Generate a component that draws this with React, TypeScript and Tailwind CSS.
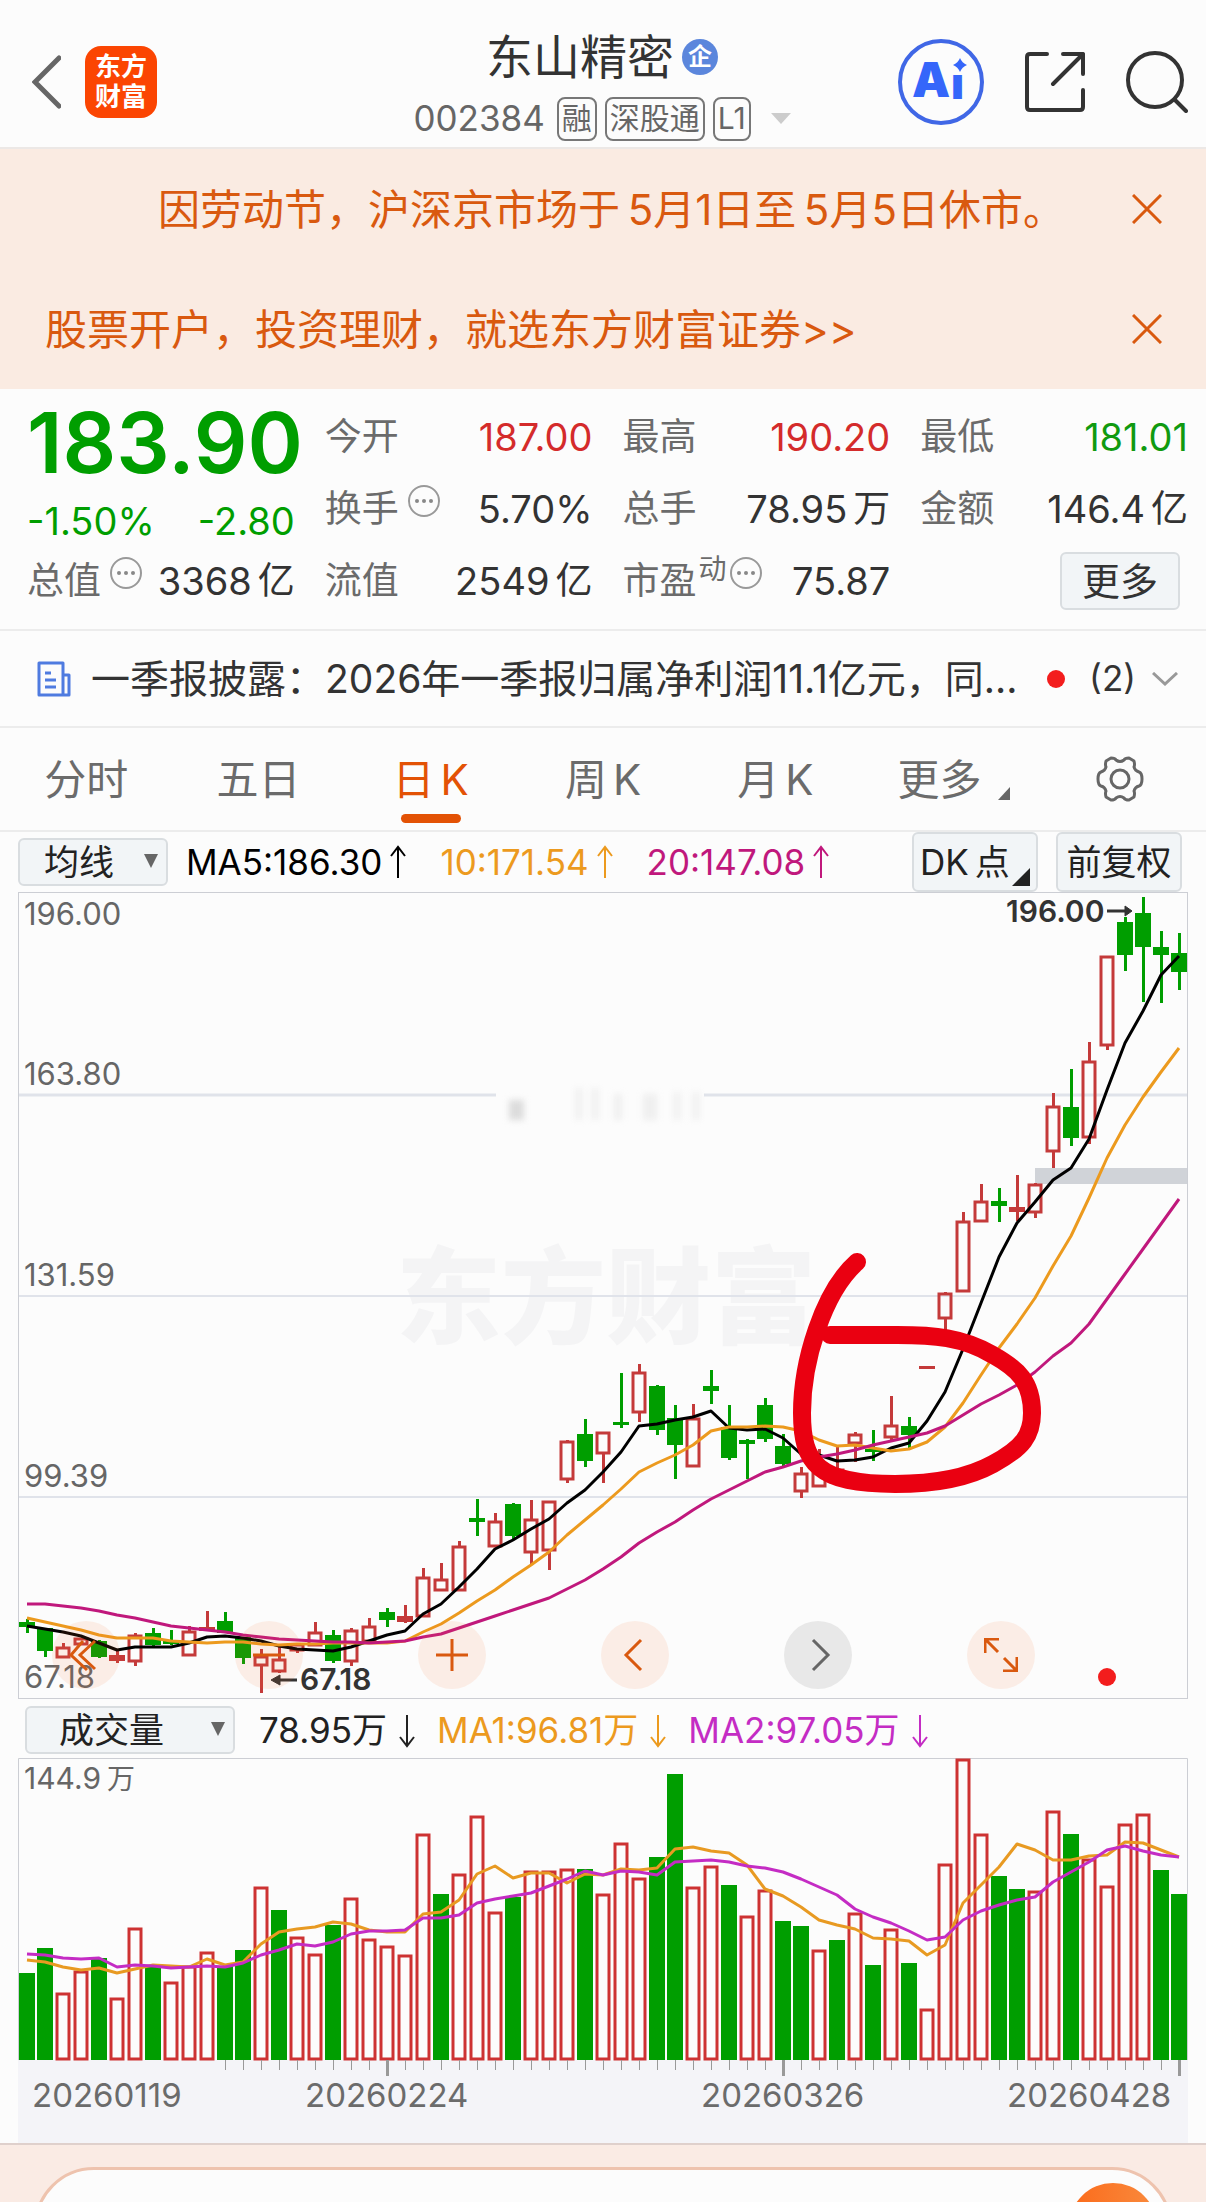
import { useState, type ReactNode } from "react";

type Candle = {
  up: boolean;
  high: number;
  top: number;
  bottom: number;
  low: number;
};

// direction, high, body top, body bottom, low (chart units, measured from the top)
const RAW_CANDLES: [string, number, number, number, number][] = [
  ["g", 727, 730, 735, 741],
  ["g", 736, 736, 759, 765],
  ["r", 751, 755, 766, 766],
  ["r", 746, 746, 753, 753],
  ["g", 748, 749, 765, 766],
  ["r", 759, 763, 769, 771],
  ["r", 741, 743, 770, 774],
  ["g", 736, 741, 753, 754],
  ["g", 738, 749, 752, 753],
  ["r", 734, 739, 764, 764],
  ["r", 719, 735, 739, 739],
  ["g", 720, 729, 741, 741],
  ["g", 745, 745, 766, 772],
  ["r", 757, 764, 774, 801],
  ["r", 755, 767, 780, 781],
  ["r", 751, 752, 759, 761],
  ["r", 730, 740, 754, 754],
  ["g", 738, 743, 769, 771],
  ["r", 736, 738, 770, 774],
  ["r", 726, 734, 750, 750],
  ["g", 716, 720, 728, 735],
  ["r", 713, 724, 730, 731],
  ["r", 676, 685, 725, 725],
  ["r", 671, 687, 699, 699],
  ["r", 649, 654, 699, 699],
  ["g", 607, 626, 630, 644],
  ["r", 621, 629, 655, 655],
  ["g", 611, 612, 644, 647],
  ["r", 608, 627, 661, 673],
  ["r", 609, 609, 659, 678],
  ["r", 548, 549, 588, 591],
  ["g", 527, 542, 569, 575],
  ["r", 540, 540, 562, 591],
  ["g", 481, 530, 533, 536],
  ["r", 472, 480, 521, 530],
  ["g", 493, 494, 538, 543],
  ["g", 513, 526, 553, 587],
  ["r", 512, 526, 575, 575],
  ["g", 478, 494, 499, 512],
  ["g", 513, 535, 566, 568],
  ["g", 547, 548, 552, 587],
  ["g", 506, 513, 547, 550],
  ["g", 542, 554, 572, 574],
  ["r", 575, 581, 600, 606],
  ["r", 557, 579, 595, 595],
  ["r", 555, 577, 591, 591],
  ["r", 540, 542, 552, 570],
  ["g", 538, 557, 560, 569],
  ["r", 504, 533, 546, 548],
  ["g", 525, 534, 543, 556],
  ["r", 474, 474, 477, 477],
  ["r", 400, 401, 427, 438],
  ["r", 320, 329, 400, 400],
  ["r", 292, 309, 330, 330],
  ["g", 296, 309, 314, 330],
  ["r", 283, 315, 320, 329],
  ["r", 291, 292, 321, 326],
  ["r", 201, 214, 260, 276],
  ["g", 177, 215, 246, 254],
  ["r", 150, 169, 246, 252],
  ["r", 64, 64, 154, 158],
  ["g", 25, 30, 63, 79],
  ["g", 5, 21, 55, 110],
  ["g", 39, 55, 63, 111],
  ["g", 41, 61, 80, 98],
];

const CANDLES: Candle[] = RAW_CANDLES.map(([dir, high, top, bottom, low]) => ({
  up: dir === "r",
  high,
  top,
  bottom,
  low,
}));

const MA5 = [
  734, 737, 740, 744, 751, 758, 755, 755, 755, 751, 745, 744, 746, 749, 754,
  757, 758, 759, 755, 749, 743, 739, 722, 712, 695, 677, 657, 648, 637, 627,
  611, 598, 580, 560, 534, 532, 528, 525, 519, 536, 538, 537, 546, 562, 563,
  569, 568, 565, 556, 551, 529, 500, 457, 411, 365, 331, 310, 288, 276, 247,
  198, 151, 119, 83, 64,
];
const MA10 = [
  726, 730, 734, 738, 743, 746, 746, 746, 749, 750, 751, 750, 750, 752, 753,
  752, 752, 751, 751, 751, 751, 749, 740, 732, 721, 709, 698, 685, 673, 660,
  643, 628, 613, 597, 580, 571, 563, 553, 539, 535, 535, 534, 535, 539, 548,
  554, 553, 556, 559, 557, 550, 535, 511, 483, 456, 432, 406, 374, 344, 306,
  266, 233, 205, 180, 156,
];
const MA20 = [
  712, 712, 714, 716, 719, 723, 726, 730, 734, 736, 738, 740, 743, 745, 747,
  748, 749, 750, 750, 751, 750, 749, 745, 742, 736, 730, 724, 718, 712, 706,
  697, 688, 677, 665, 651, 640, 630, 618, 607, 598, 589, 580, 575, 569, 565,
  562, 558, 553, 549, 545, 541, 534, 523, 512, 503, 493, 480, 464, 451, 432,
  407, 382, 357, 332, 307,
];

// volume figures are in thirds of a chart unit, measured from the row above the plot
const VOLUME = [
  849, 774, 910, 845, 806, 924, 716, 830, 878, 828, 786, 830, 780, 592, 661,
  743, 792, 707, 625, 748, 768, 797, 432, 612, 554, 380, 667, 622, 545, 543,
  538, 537, 613, 461, 564, 501, 254, 591, 529, 587, 680, 601, 695, 709, 781,
  751, 669, 827, 717, 820, 958, 523, 207, 432, 560, 599, 604, 364, 432, 507,
  588, 403, 374, 541, 614,
];
const VOLUME_COLORS =
  "ggrrgrrgrrrggrgrrgrrrrrgrrrgrrrgrrrggrrgrrggrgrgrgrrrrggrrgrrrrgg";
const VOL_MA1 = [
  811, 816, 832, 842, 835, 850, 838, 825, 829, 831, 808, 826, 818, 763, 728,
  719, 711, 698, 704, 722, 726, 727, 673, 668, 630, 554, 528, 565, 550, 549,
  580, 554, 557, 539, 541, 536, 479, 472, 485, 490, 525, 597, 618, 653, 690,
  706, 718, 744, 748, 754, 796, 766, 641, 585, 532, 463, 480, 510, 511, 500,
  497, 458, 460, 480, 501,
];
const VOL_MA2 = [
  793, 795, 805, 809, 805, 831, 827, 828, 834, 833, 828, 832, 821, 797, 780,
  763, 770, 756, 734, 725, 723, 720, 684, 686, 676, 640, 627, 619, 610, 590,
  567, 543, 557, 545, 546, 556, 517, 513, 511, 516, 530, 536, 546, 569, 591,
  617, 658, 682, 701, 723, 750, 743, 692, 665, 646, 630, 623, 577, 547, 516,
  480, 469, 485, 495, 502,
];

const TABS = ["分时", "五日", "日K", "周K", "月K"];

const barX = (i: number) => 9 + i * 18;
const volY = (v: number) => Math.round((v - 205) / 3);

const toPoints = (values: number[]) =>
  values.map((y, i) => `${barX(i)},${y}`).join(" ");

function Close() {
  return (
    <svg viewBox="0 0 30 30" className="size-[30px]" fill="none">
      <path d="M1 1 29 29M29 1 1 29" stroke="#d9590f" strokeWidth="3" />
    </svg>
  );
}

function Dots() {
  return (
    <svg viewBox="0 0 34 34" className="size-[34px] shrink-0 -translate-y-2">
      <circle cx="17" cy="17" r="15" fill="none" stroke="#999" strokeWidth="2" />
      <circle cx="10" cy="17" r="2" fill="#888" />
      <circle cx="17" cy="17" r="2" fill="#888" />
      <circle cx="24" cy="17" r="2" fill="#888" />
    </svg>
  );
}

function Arrow({ down = false }: { down?: boolean }) {
  return (
    <svg
      viewBox="0 0 16 34"
      className="h-[34px] w-4 shrink-0"
      fill="none"
      stroke="currentColor"
      strokeWidth="2"
    >
      {down ? (
        <path d="M8 1V32M1 23 8 32 15 23" />
      ) : (
        <path d="M8 33V2M1 11 8 2 15 11" />
      )}
    </svg>
  );
}

function Quote({
  label,
  value,
  unit,
  color = "text-[#333]",
  extra,
}: {
  label: string;
  value: string;
  unit?: string;
  color?: string;
  extra?: ReactNode;
}) {
  return (
    <div className="flex items-center justify-between whitespace-nowrap">
      <span className="flex items-center text-[37px] text-[#6b6b6b]">
        {label}
        {extra}
      </span>
      <span className={`flex items-center gap-1.5 ${color}`}>
        {value}
        {unit && <span className="text-[37px]">{unit}</span>}
      </span>
    </div>
  );
}

function Picker({
  label,
  options,
  className,
}: {
  label: string;
  options: string[];
  className: string;
}) {
  return (
    <div className={`relative shrink-0 ${className}`}>
      <select
        aria-label={label}
        className="h-12 w-full appearance-none rounded-md border-2 border-[#d9dde0] bg-[#f2f5f7] text-[35px] leading-[44px] text-[#222]"
      >
        {options.map((o) => (
          <option key={o}>{o}</option>
        ))}
      </select>
      <svg
        viewBox="0 0 14 14"
        className="pointer-events-none absolute top-[18px] right-2.5 size-[14px]"
      >
        <path d="M0 0H14L7 14Z" fill="#666" />
      </svg>
    </div>
  );
}

function PriceChart() {
  return (
    <svg
      viewBox="0 0 1170 807"
      className="block h-auto w-full"
      role="img"
      aria-label="日K线"
    >
      <text x="378" y="443" fontSize="105" fontWeight="900" fill="#f4f4f5">
        东方财富
      </text>
      <g stroke="#e0e3ea" strokeWidth="2">
        <path d="M0 203H478M686 203H1170" strokeWidth="3" />
        <path d="M0 404H1170M0 605H1170" />
      </g>
      <g fill="#dcdcdc" className="blur-[3px]">
        <rect x="491" y="208" width="15" height="20" />
        <rect x="557" y="196" width="8" height="32" opacity="0.3" />
        <rect x="573" y="196" width="8" height="32" opacity="0.3" />
        <rect x="596" y="202" width="8" height="26" opacity="0.4" />
        <rect x="625" y="202" width="14" height="26" opacity="0.4" />
        <rect x="655" y="200" width="8" height="28" opacity="0.3" />
        <rect x="674" y="200" width="8" height="28" opacity="0.3" />
      </g>
      <rect x="0.5" y="0.5" width="1169" height="806" fill="none" stroke="#ccced4" />
      <rect x="1017" y="276" width="152" height="16" fill="#d0d3d8" />

      {CANDLES.map((c, i) => {
        const x = barX(i);
        const h = Math.max(c.bottom - c.top, 3);
        if (!c.up) {
          return (
            <g key={i} fill="#009e00">
              <rect x={x - 1} y={c.high} width="3" height={c.low - c.high} />
              <rect x={x - 8} y={c.top} width="16" height={h} />
            </g>
          );
        }
        return (
          <g key={i} fill="#c43a3a">
            <rect x={x - 1} y={c.high} width="3" height={c.top - c.high} />
            <rect x={x - 1} y={c.bottom} width="3" height={c.low - c.bottom} />
            {h < 7 ? (
              <rect x={x - 8} y={c.top} width="16" height={h} />
            ) : (
              <rect
                x={x - 6}
                y={c.top + 1}
                width="12"
                height={h - 2}
                fill="none"
                stroke="#c43a3a"
                strokeWidth="3"
              />
            )}
          </g>
        );
      })}

      <g fill="none" strokeWidth="3" strokeLinejoin="round">
        <polyline points={toPoints(MA5)} stroke="#000" />
        <polyline points={toPoints(MA10)} stroke="#ec9a1e" />
        <polyline points={toPoints(MA20)} stroke="#c0187c" />
      </g>

      <g fontSize="31" fill="#666">
        <text x="6" y="33">196.00</text>
        <text x="6" y="193">163.80</text>
        <text x="6" y="394">131.59</text>
        <text x="6" y="595">99.39</text>
        <text x="6" y="796">67.18</text>
      </g>
      <g fontSize="30" fontWeight="600" fill="#333">
        <text x="988" y="30">196.00</text>
        <text x="282" y="798">67.18</text>
      </g>
      <g stroke="#333" strokeWidth="3" fill="#333">
        <path d="M1089 19H1110" />
        <path d="M1107 14 1114 19 1107 24Z" strokeWidth="1" />
        <path d="M279 788H260" />
        <path d="M262 783 253 788 262 793Z" strokeWidth="1" />
      </g>

      <path
        d="M839 370C805 400 784 470 784 521C784 572 800 592 877 592C925 592 955 583 975 572C1005 556 1014 543 1014 521C1014 490 1000 477 975 463C945 445 915 443 879 443H812"
        fill="none"
        stroke="#ea0011"
        strokeWidth="18"
        strokeLinecap="round"
      />
      <circle cx="1089" cy="785" r="9" fill="#f31d1d" />
    </svg>
  );
}

const TOOLS: { name: string; path: string; gray?: boolean }[] = [
  { name: "最左", path: "M14 3 2 17 18 32M26 3 11 17 26 31" },
  { name: "缩小", path: "M1 17H33" },
  { name: "放大", path: "M1 17H33M17 1V33" },
  { name: "左移", path: "M23 2 8 17 23 32" },
  { name: "右移", path: "M12 2 27 17 12 32", gray: true },
  { name: "全屏", path: "M1 15V1H15M1 1 14 14M33 19V33H19M33 33 20 20" },
];

function VolumeChart() {
  return (
    <svg
      viewBox="0 0 1170 385"
      className="block h-auto w-full"
      role="img"
      aria-label="成交量"
    >
      <rect x="0" y="302" width="1170" height="83" fill="#f4f4f8" />
      <path d="M0.5 302V0.5H1169.5V302" fill="none" stroke="#ccced4" />
      <g fontSize="30" fill="#666">
        <text x="6" y="31">144.9</text>
        <text x="89" y="31" fontSize="28">万</text>
      </g>
      {VOLUME.map((v, i) => {
        const x = barX(i);
        const y = volY(v);
        return VOLUME_COLORS[i] === "g" ? (
          <rect key={i} x={x - 8} y={y} width="16" height={302 - y} fill="#009e00" />
        ) : (
          <rect
            key={i}
            x={x - 6}
            y={y + 1}
            width="12"
            height={300 - y}
            fill="#fcfcfc"
            stroke="#cd3232"
            strokeWidth="3"
          />
        );
      })}
      <g fill="none" strokeWidth="3" strokeLinejoin="round">
        <polyline points={toPoints(VOL_MA1.map(volY))} stroke="#e89a22" />
        <polyline points={toPoints(VOL_MA2.map(volY))} stroke="#c42cc4" />
      </g>
      {VOLUME.map((_, i) => {
        if (i < 11) return null;
        const major = i === 20 || i === 42 || i === 64;
        return (
          <rect
            key={i}
            x={major ? barX(i) - 1 : barX(i)}
            y="302"
            width={major ? 3 : 1}
            height={major ? 16 : 10}
            fill="#999"
          />
        );
      })}
      <g fontSize="33" fill="#6b6b6b">
        <text x="14" y="349">20260119</text>
        <text x="287" y="349">20260224</text>
        <text x="683" y="349">20260326</text>
        <text x="989" y="349">20260428</text>
      </g>
    </svg>
  );
}

export default function App() {
  const [tab, setTab] = useState("日K");

  return (
    <div className="bg-[#fcfcfc] font-['Inter','Noto_Sans_CJK_SC',sans-serif] text-[#333]">
      <header className="flex h-[149px] items-center justify-between border-b-2 border-[#ece8e6] pt-4 pr-[18px] pl-4">
        <div className="flex flex-1 items-center gap-6">
          <button aria-label="返回" className="ml-4">
            <svg viewBox="0 0 29 54" className="h-[54px] w-[29px]" fill="none">
              <path d="M27 3 3 27 27 51" stroke="#666" strokeWidth="5" strokeLinecap="round" />
            </svg>
          </button>
          <a
            href="#home"
            className="flex size-[72px] flex-col items-center justify-center rounded-2xl bg-[#fb4502] text-[26px] leading-[30px] font-bold text-white"
          >
            <span>东方</span>
            <span>财富</span>
          </a>
        </div>

        <div className="flex flex-col items-center pt-3">
          <h1 className="flex items-center gap-2 text-[47px] leading-[62px] text-[#333]">
            东山精密
            <span className="flex size-9 items-center justify-center rounded-full bg-[#5b86dc] text-2xl font-bold text-white">
              企
            </span>
          </h1>
          <div className="flex h-[62px] items-center gap-2 text-[#666]">
            <span className="mr-1 text-[35px]">002384</span>
            <span className="flex h-11 items-center rounded-lg border-2 border-[#777] px-[3px] text-[30px]">融</span>
            <span className="flex h-11 items-center rounded-lg border-2 border-[#777] px-[3px] text-[30px]">深股通</span>
            <span className="flex h-11 items-center rounded-lg border-2 border-[#777] px-[3px] text-[30px]">L1</span>
            <button aria-label="展开" className="ml-3">
              <svg viewBox="0 0 20 11" className="h-[11px] w-5">
                <path d="M0 0H20L10 11Z" fill="#ccc" />
              </svg>
            </button>
          </div>
        </div>

        <div className="flex flex-1 items-center justify-end gap-[41px]">
          <button aria-label="AI">
            <svg viewBox="0 0 86 86" className="size-[86px]">
              <circle cx="43" cy="43" r="41" fill="none" stroke="#4067e6" strokeWidth="4" />
              <text x="14" y="58" fontSize="48" fontWeight="900" fill="#3566fa">
                A
              </text>
              <text x="53" y="60" fontSize="44" fontWeight="900" fill="#3566fa">
                ı
              </text>
              <path d="M62 19Q64 24 69 26Q64 28 62 33Q60 28 55 26Q60 24 62 19Z" fill="#3566fa" />
            </svg>
          </button>
          <button aria-label="分享">
            <svg
              viewBox="0 0 60 60"
              className="size-[60px]"
              fill="none"
              stroke="#333"
              strokeWidth="4"
              strokeLinecap="round"
              strokeLinejoin="round"
            >
              <path d="M22 2H5Q2 2 2 5V55Q2 58 5 58H55Q58 58 58 55V38" />
              <path d="M38 2H58V22M58 2 28 32" />
            </svg>
          </button>
          <button aria-label="搜索">
            <svg
              viewBox="0 0 62 62"
              className="size-[62px]"
              fill="none"
              stroke="#333"
              strokeWidth="4"
              strokeLinecap="round"
            >
              <circle cx="29" cy="29" r="27" />
              <path d="M49 49 60 60" />
            </svg>
          </button>
        </div>
      </header>

      <section className="bg-[#faebe2] text-[42px] text-[#d9590f]">
        <div className="flex h-[120px] items-center justify-between pr-11 pl-[158px]">
          <p>因劳动节，沪深京市场于&thinsp;5月1日至&thinsp;5月5日休市。</p>
          <button aria-label="关闭公告">
            <Close />
          </button>
        </div>
        <div className="flex h-[120px] items-center justify-between pr-11 pl-[45px]">
          <a href="#open">股票开户，投资理财，就选东方财富证券&gt;&gt;</a>
          <button aria-label="关闭广告">
            <Close />
          </button>
        </div>
      </section>

      <section className="grid h-[242px] grid-cols-4 grid-rows-[72px_72px_72px] gap-x-[30px] border-b-2 border-[#ececec] pt-3 pr-[18px] pl-[27px] text-[38px]">
        <div className="row-span-2 flex flex-col text-[#009e00]">
          <strong className="text-[84px] leading-[84px] font-semibold">183.90</strong>
          <div className="flex h-[72px] shrink-0 items-center justify-between">
            <span>-1.50%</span>
            <span>-2.80</span>
          </div>
        </div>
        <Quote label="今开" value="187.00" color="text-[#d42b2b]" />
        <Quote label="最高" value="190.20" color="text-[#d42b2b]" />
        <Quote label="最低" value="181.01" color="text-[#109a10]" />
        <Quote
          label="换手"
          value="5.70%"
          extra={
            <span className="ml-2">
              <Dots />
            </span>
          }
        />
        <Quote label="总手" value="78.95" unit="万" />
        <Quote label="金额" value="146.4" unit="亿" />
        <Quote
          label="总值"
          value="3368"
          unit="亿"
          extra={
            <span className="ml-2">
              <Dots />
            </span>
          }
        />
        <Quote label="流值" value="2549" unit="亿" />
        <Quote
          label="市盈"
          value="75.87"
          extra={
            <>
              <span className="mx-0.5 -translate-y-3 text-[28px]">动</span>
              <Dots />
            </>
          }
        />
        <div className="flex items-center justify-end pr-2">
          <button className="h-[58px] w-[120px] rounded-md border-2 border-[#d9dde0] bg-[#f2f5f7] leading-none">
            更多
          </button>
        </div>
      </section>

      <section className="flex h-[97px] items-center border-b-2 border-[#ececec] pr-7 pl-[37px]">
        <svg
          viewBox="0 0 34 36"
          className="h-9 w-[34px] shrink-0"
          fill="none"
          stroke="#4f7be0"
          strokeWidth="3"
          strokeLinejoin="round"
        >
          <path d="M27 34H2V2H26V34H32V14H26" />
          <path d="M8 12H14M8 19H19M8 26H19" />
        </svg>
        <a href="#news" className="ml-5 min-w-0 flex-1 truncate text-[39px] leading-[56px]">
          一季报披露：2026年一季报归属净利润11.1亿元，同...
        </a>
        <span className="size-[18px] rounded-full bg-[#f31d1d]" />
        <span className="mr-4 ml-6 text-[35px]">(2)</span>
        <button aria-label="展开新闻">
          <svg viewBox="0 0 26 14" className="h-[14px] w-[26px]" fill="none">
            <path d="M1 1 13 12 25 1" stroke="#999" strokeWidth="3" />
          </svg>
        </button>
      </section>

      <nav className="grid h-[104px] grid-cols-7 border-b-2 border-[#ececec] text-[42px]">
        {TABS.map((t) => (
          <button
            key={t}
            onClick={() => setTab(t)}
            className={`relative flex items-center justify-center gap-1.5 ${
              tab === t ? "text-[#e35205]" : "text-[#6b6b6b]"
            }`}
          >
            {t.endsWith("K") ? (
              <>
                <span>{t[0]}</span>
                <span>K</span>
              </>
            ) : (
              t
            )}
            {tab === t && (
              <span className="absolute bottom-[7px] left-1/2 h-[9px] w-[60px] -translate-x-1/2 rounded-full bg-[#e35205]" />
            )}
          </button>
        ))}
        <button className="flex items-center justify-center gap-4 pl-3 text-[#6b6b6b]">
          更多
          <svg viewBox="0 0 12 13" className="mt-7 h-[13px] w-3">
            <path d="M12 0V13H0Z" fill="#666" />
          </svg>
        </button>
        <button aria-label="设置" className="flex items-center justify-center">
          <svg
            viewBox="0 0 48 48"
            className="size-12"
            fill="none"
            stroke="#666"
            strokeWidth="3"
            strokeLinejoin="round"
          >
            <path d="M15 3Q19 3 20 5Q24 8 28 5Q29 3 33 3L38 6Q39 10 38 12Q39 16 43 17Q46 18 46 24Q46 30 43 31Q39 32 38 36Q39 38 38 42L33 45Q29 45 28 43Q24 40 20 43Q19 45 15 45L10 42Q9 38 10 36Q9 32 5 31Q2 30 2 24Q2 18 5 17Q9 16 10 12Q9 10 10 6Z" />
            <circle cx="24" cy="24" r="9" />
          </svg>
        </button>
      </nav>

      <div className="flex h-[60px] items-center pr-6 pl-[18px] text-[35px] whitespace-nowrap">
        <Picker
          label="主图指标"
          options={["均线", "BOLL"]}
          className="w-[150px] [&>select]:pl-6"
        />
        <span className="ml-[18px] flex items-center gap-2 text-black">
          MA5:186.30
          <Arrow />
        </span>
        <span className="ml-[34px] flex items-center gap-2 text-[#ec9a1e]">
          10:171.54
          <Arrow />
        </span>
        <span className="ml-[34px] flex items-center gap-2 text-[#c0187c]">
          20:147.08
          <Arrow />
        </span>
        <div className="ml-auto flex gap-[18px] self-stretch">
          <button className="relative flex w-[126px] items-center gap-1.5 rounded-md border-2 border-[#d9dde0] bg-[#f2f5f7] pl-1.5 text-[#222]">
            <span>DK</span>
            <span>点</span>
            <svg viewBox="0 0 18 18" className="absolute right-1.5 bottom-1 size-[18px]">
              <path d="M18 0V18H0Z" fill="#222" />
            </svg>
          </button>
          <button className="w-[126px] rounded-md border-2 border-[#d9dde0] bg-[#f2f5f7] text-[#222]">
            前复权
          </button>
        </div>
      </div>

      <div className="relative mx-[18px]">
        <PriceChart />
        <div className="absolute bottom-[10px] left-[34px] flex gap-[115px]">
          {TOOLS.map((t) => (
            <button
              key={t.name}
              aria-label={t.name}
              className={`flex size-[68px] items-center justify-center rounded-full ${
                t.gray ? "bg-[#e8e8e8] text-[#666]" : "bg-[#f26a2b]/10 text-[#d9590f]"
              }`}
            >
              <svg
                viewBox="0 0 34 34"
                className="size-[34px]"
                fill="none"
                stroke="currentColor"
                strokeWidth="3"
              >
                <path d={t.path} />
              </svg>
            </button>
          ))}
        </div>
      </div>

      <div className="flex h-[59px] items-center pt-1 pl-[25px] text-[35px] whitespace-nowrap">
        <Picker
          label="副图指标"
          options={["成交量", "MACD", "KDJ"]}
          className="w-[210px] [&>select]:pl-8"
        />
        <span className="ml-6 flex items-center gap-3 text-[#222]">
          78.95万
          <Arrow down />
        </span>
        <span className="ml-[22px] flex items-center gap-3 text-[#ec9a1e]">
          MA1:96.81万
          <Arrow down />
        </span>
        <span className="ml-[22px] flex items-center gap-3 text-[#c42cc4]">
          MA2:97.05万
          <Arrow down />
        </span>
      </div>

      <div className="mx-[18px]">
        <VolumeChart />
      </div>

      <footer className="h-[59px] overflow-hidden border-t-2 border-[#dfd0cc] bg-[#faebe4] px-[34px] pt-[22px]">
        <div className="flex h-[120px] items-start justify-end rounded-[60px] border-[3px] border-[#eec3ae] bg-[#fcfcfc] pt-[13px] pr-3">
          <button
            aria-label="问一问"
            className="size-[88px] rounded-full bg-linear-to-r from-[#fb6a18] to-[#f98a3c]"
          />
        </div>
      </footer>
    </div>
  );
}
